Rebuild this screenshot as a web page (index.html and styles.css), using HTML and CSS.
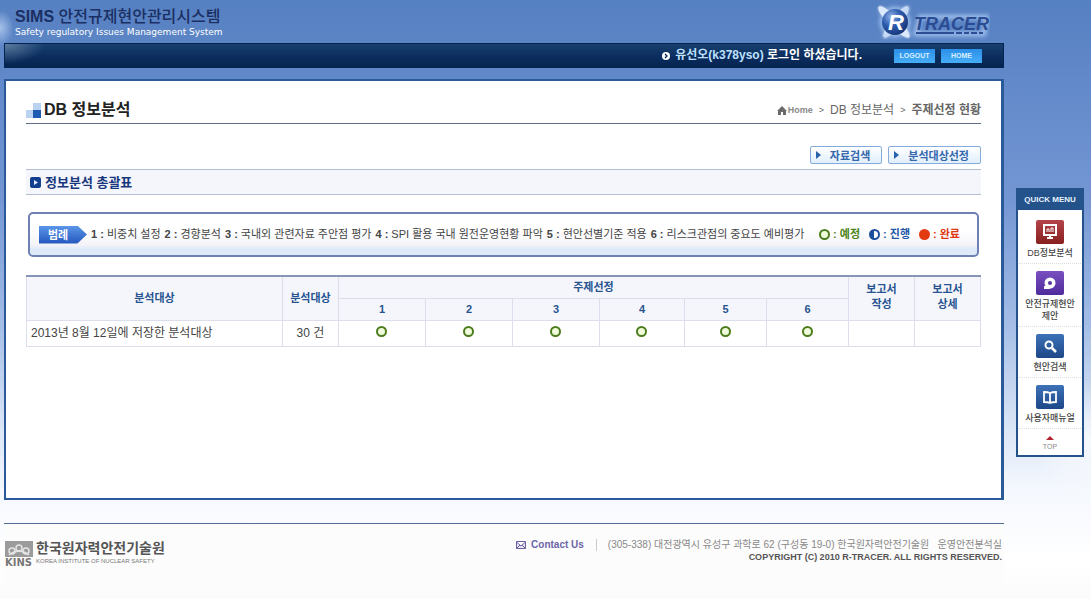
FILE: index.html
```html
<!DOCTYPE html>
<html lang="ko">
<head>
<meta charset="utf-8">
<title>SIMS 안전규제현안관리시스템</title>
<link rel="stylesheet" href="styles.css">
</head>
<body>
<div class="page">
  <div class="column">
    <header class="masthead">
      <a class="brand" href="#">
        <span class="brand-name"><b>SIMS</b> 안전규제현안관리시스템</span>
        <span class="brand-sub">Safety regulatory Issues Management System</span>
      </a>
      <a class="tracer" href="#" aria-label="R-TRACER">
        <svg width="116" height="40" viewBox="0 0 116 40">
          <defs>
            <radialGradient id="ball" cx=".35" cy=".3" r=".8"><stop offset="0" stop-color="#8fb2ea"/><stop offset=".45" stop-color="#2f5cae"/><stop offset="1" stop-color="#12306f"/></radialGradient>
            <filter id="halo" x="-20%" y="-30%" width="140%" height="160%"><feGaussianBlur stdDeviation="2"/></filter>
          </defs>
          <g filter="url(#halo)" fill="none" stroke="#a9c8f2" stroke-width="4"><circle cx="21" cy="21" r="13"/><path d="M6 8l30 26M10 36L34 6M42 33h68l3-17H46z"/></g>
          <ellipse cx="20" cy="21" rx="22" ry="6" transform="rotate(45 20 21)" fill="#dbe9fb" stroke="#88a6d8"/>
          <ellipse cx="22" cy="21" rx="20" ry="6" transform="rotate(-52 22 21)" fill="#c6daf6" stroke="#88a6d8"/>
          <circle cx="21" cy="21" r="13" fill="url(#ball)"/>
          <text x="14" y="29" class="logo-r">R</text>
          <text x="40" y="29" class="logo-word">TRACER</text>
          <path d="M42 32h38M82 32h6M90 32h5M97 32h6M105 32h4" stroke="#2b4c93" stroke-width="2"/>
        </svg>
      </a>
    </header>

    <div class="userbar">
      <svg width="8" height="8" viewBox="0 0 8 8"><circle cx="4" cy="4" r="4" fill="#fff"/><path d="M3 2l2 2-2 2" fill="none" stroke="#06285a" stroke-width="1.4"/></svg>
      <span class="user-msg"><span class="user-id">유선오(k378yso)</span> 로그인 하셨습니다.</span>
      <button class="mini" type="button">LOGOUT</button>
      <button class="mini" type="button">HOME</button>
    </div>

    <main class="panel">
      <div class="title-row">
        <svg width="15" height="15" viewBox="0 0 15 15"><path fill="#b9d3f1" d="M7 0h8v7H7zM0 7h7v8H0z"/><path fill="#1f5bb0" d="M7 7h8v8H7z"/></svg>
        <h1>DB 정보분석</h1>
        <nav class="crumbs">
          <a class="crumb-home" href="#"><svg width="10" height="9" viewBox="0 0 10 9"><path d="M5 0l5 5H9v4H6V6H4v3H1V5H0z" fill="#6b6b6b"/></svg>Home</a>
          <span class="sep">&gt;</span><a href="#">DB 정보분석</a><span class="sep">&gt;</span><b>주제선정 현황</b>
        </nav>
      </div>

      <div class="actions">
        <button class="act" type="button"><svg width="5" height="8" viewBox="0 0 5 8"><path d="M0 0l5 4-5 4z" fill="#2862a8"/></svg>자료검색</button>
        <button class="act" type="button"><svg width="5" height="8" viewBox="0 0 5 8"><path d="M0 0l5 4-5 4z" fill="#2862a8"/></svg>분석대상선정</button>
      </div>

      <h2 class="section">
        <svg width="11" height="11" viewBox="0 0 11 11"><rect width="11" height="11" rx="2" fill="#123f8e"/><path d="M4 3l4 2.500-4 2.500z" fill="#dce9ff"/></svg>
        정보분석 총괄표
      </h2>

      <div class="legend">
        <span class="legend-tag">범례</span>
        <ul class="legend-items">
          <li><b>1 :</b> 비중치 설정</li>
          <li><b>2 :</b> 경향분석</li>
          <li><b>3 :</b> 국내외 관련자료 주안점 평가</li>
          <li><b>4 :</b> SPI 활용 국내 원전운영현황 파악</li>
          <li><b>5 :</b> 현안선별기준 적용</li>
          <li><b>6 :</b> 리스크관점의 중요도 예비평가</li>
        </ul>
        <ul class="legend-states">
          <li class="plan"><i class="dot ring"></i>: 예정</li>
          <li class="work"><i class="dot half"></i>: 진행</li>
          <li class="done"><i class="dot full"></i>: 완료</li>
        </ul>
      </div>

      <table class="grid">
        <colgroup><col class="c-name"><col class="c-count"><col class="c-n"><col class="c-n"><col class="c-n"><col class="c-m"><col class="c-s"><col class="c-s"><col class="c-r"><col class="c-r"></colgroup>
        <thead>
          <tr><th rowspan="2">분석대상</th><th rowspan="2">분석대상</th><th colspan="6">주제선정</th><th rowspan="2" class="two-line">보고서<br>작성</th><th rowspan="2" class="two-line">보고서<br>상세</th></tr>
          <tr><th>1</th><th>2</th><th>3</th><th>4</th><th>5</th><th>6</th></tr>
        </thead>
        <tbody>
          <tr><td class="name">2013년 8월 12일에 저장한 분석대상</td><td>30 건</td><td><i class="dot ring"></i></td><td><i class="dot ring"></i></td><td><i class="dot ring"></i></td><td><i class="dot ring"></i></td><td><i class="dot ring"></i></td><td><i class="dot ring"></i></td><td></td><td></td></tr>
        </tbody>
      </table>
    </main>

    <footer class="foot">
      <div class="org">
        <svg width="28" height="26" viewBox="0 0 28 26">
          <path fill="#9b9b9b" d="M0 0h28v16H0z"/>
          <g fill="none" stroke="#e4e4e4" stroke-width="1.500"><circle cx="7" cy="10" r="3"/><circle cx="14" cy="7" r="3"/><circle cx="21" cy="10" r="3"/><path d="M4 14c5-5 15-5 20 0"/></g>
          <text x="0" y="25" class="kins">KINS</text>
        </svg>
        <div class="org-names"><span class="org-ko">한국원자력안전기술원</span><span class="org-en">KOREA INSTITUTE OF NUCLEAR SAFETY</span></div>
      </div>
      <div class="contact">
        <div class="contact-line">
          <a class="mail" href="#"><svg width="10" height="8" viewBox="0 0 10 8"><path d="M.5.5h9v7h-9zM.5 1L5 5l4.500-4M.5 7.500L4 4M9.500 7.500L6 4" fill="#e8e6f5" stroke="#6d64a6"/></svg>Contact Us</a>
          <address>(305-338) 대전광역시 유성구 과학로 62 (구성동 19-0) 한국원자력안전기술원 &nbsp; 운영안전분석실</address>
        </div>
        <div class="copy">COPYRIGHT (C) 2010 R-TRACER. ALL RIGHTS RESERVED.</div>
      </div>
    </footer>
  </div>

  <aside class="quick">
    <h3>QUICK MENU</h3>
    <ul>
      <li><a href="#"><svg class="q red" width="28" height="24" viewBox="0 0 28 24"><path d="M8 5h12v10H8zM11 18h6M14 15v3" fill="none" stroke="#fff" stroke-width="2"/><path d="M11 12V9h2v3M15 12V8h2v4" fill="none" stroke="#fff"/></svg>DB정보분석</a></li>
      <li><a href="#"><svg class="q violet" width="28" height="24" viewBox="0 0 28 24"><circle cx="14" cy="12" r="5.500" fill="#fff"/><path d="M8 15h6v3H8z" fill="#fff"/><circle cx="14" cy="12" r="2" fill="#5a35a0"/></svg>안전규제현안<br>제안</a></li>
      <li><a href="#"><svg class="q blue" width="28" height="24" viewBox="0 0 28 24"><circle cx="13" cy="11" r="3.500" fill="none" stroke="#fff" stroke-width="2"/><path d="M16 14l4 4" stroke="#fff" stroke-width="2.500"/></svg>현안검색</a></li>
      <li><a href="#"><svg class="q blue" width="28" height="24" viewBox="0 0 28 24"><path d="M14 8c-2-1-4-1-6-1v10c2 0 4 0 6 1 2-1 4-1 6-1V7c-2 0-4 0-6 1zv9" fill="none" stroke="#fff" stroke-width="1.800"/></svg>사용자매뉴얼</a></li>
      <li class="top"><a href="#"><svg width="8" height="4" viewBox="0 0 8 4"><path d="M4 0l4 4H0z" fill="#b32433"/></svg>TOP</a></li>
    </ul>
  </aside>
</div>
</body>
</html>
```
FILE: styles.css
```css
* { box-sizing: border-box; }
body {
  margin: 0;
  min-height: 100vh;
  font: 12px/15px "Liberation Sans", "Noto Sans CJK KR", sans-serif;
  color: #444;
  background:
    radial-gradient(ellipse 14px 18px at 0 28px, rgba(200, 220, 248, .7), transparent),
    radial-gradient(ellipse 60px 60px at 1091px 440px, rgba(255, 255, 255, .7), transparent),
    linear-gradient(#5580c1, #6289ca 80px, #7496d3 200px, #a3bce6 320px, #d7e3f5 420px, #f5f8fe 490px, #fff 560px, #fcfcfc 590px);
}
a { color: inherit; text-decoration: none; }
ul { list-style: none; margin: 0; padding: 0; }
button { font-family: inherit; cursor: pointer; }
svg { flex: none; }
.page { display: flex; align-items: flex-start; gap: 12px; padding: 0 7px 0 4px; }
.column { flex: 1; min-width: 0; }

.masthead { display: flex; justify-content: space-between; height: 43px; padding: 8px 14px 0 11px; }
.brand { display: flex; flex-direction: column; }
.brand-name { font-size: 16px; line-height: 18px; font-weight: 500; color: #1b2f63; }
.brand-name b { font-size: 16px; }
.brand-sub { font: 9px/12px "DejaVu Sans", sans-serif; color: #fff; }
.tracer { margin-top: -7px; }
.logo-r { font: italic bold 22px "Liberation Sans", sans-serif; fill: #fff; }
.logo-word { font: italic bold 18px "Liberation Sans", sans-serif; fill: #2b4c93; }

.userbar {
  display: flex; align-items: center; justify-content: flex-end;
  height: 25px; padding-right: 21px;
  border: 1px solid #052350;
  background: radial-gradient(ellipse 40px 20px at 0 0, rgba(150, 175, 200, .55), transparent), linear-gradient(#17406f, #0a2c5d 60%, #062450);
  color: #fff; font-weight: bold;
}
.user-msg { margin: 0 32px 0 5px; }
.user-id { color: #bfe0ff; }
.mini { width: 41px; height: 14px; margin-left: 6px; padding: 0; border: 0; background: linear-gradient(#2d8fe8, #45aef8); color: #d8efff; font-size: 7px; line-height: 14px; font-weight: bold; }
.user-msg + .mini { margin-left: 0; }

.panel { min-height: 421px; margin-top: 11px; padding: 16px 20px 0; border: 2px solid #2b5a9b; border-right-width: 3px; background: #fff; }
.title-row { display: flex; align-items: center; height: 27px; border-bottom: 1px solid #5f6b88; }
.title-row h1 { margin: 0 auto 0 3px; font-size: 16px; line-height: 24px; color: #222; }
.crumbs { display: flex; align-items: center; color: #666; }
.crumb-home { display: flex; align-items: center; gap: 1px; font-size: 9px; font-weight: bold; color: #888; }
.sep { margin: 0 6px; font-size: 9px; }
.actions { display: flex; justify-content: flex-end; gap: 6px; margin-top: 22px; }
.act { display: flex; align-items: center; gap: 9px; height: 18px; padding: 0 11px 0 5px; border: 1px solid #84abdc; border-radius: 2px; background: linear-gradient(#fff, #e0effc); color: #3568ac; font-size: 11px; font-weight: bold; }
.section { display: flex; align-items: center; gap: 4px; height: 26px; margin: 5px 0 0; padding-left: 4px; border: solid #b5bdd3; border-width: 1px 0; background: #f5f5fc; color: #17387d; font-size: 13px; }

.legend { display: flex; align-items: center; height: 45px; margin: 17px 2px 0; padding: 0 17px 0 9px; border: 2px solid #6f80b4; border-radius: 5px; background: linear-gradient(#fff 40%, #f4f3f8 75%, #dfeaf9 85%); font-size: 11px; white-space: nowrap; }
.legend-tag { width: 48px; height: 18px; padding-left: 9px; line-height: 18px; clip-path: polygon(0 0, 80% 0, 100% 50%, 80% 100%, 0 100%); background: linear-gradient(#5b96ea, #2456bd); color: #fff; font-weight: bold; }
.legend-items { display: flex; gap: 4px; margin: 0 auto 0 4px; }
.legend-states { display: flex; gap: 9px; font-weight: bold; }
.legend-states li { display: flex; align-items: center; gap: 3px; }
.plan { color: #4c8420; }
.work { color: #1c58a5; }
.done { color: #e03410; }
.dot { display: inline-block; width: 11px; height: 11px; border-radius: 50%; }
.ring { border: 2px solid #4c7c1c; background: #f0fbdc; }
.half { border: 2px solid #1c4f9c; background: linear-gradient(90deg, #1c4f9c 50%, #fff 50%); }
.full { background: #e33a12; }

.grid { width: 100%; margin-top: 18px; table-layout: fixed; border-collapse: collapse; border-top: 2px solid #8796b6; }
.grid th, .grid td { padding: 0; border: 1px solid #dcdeed; text-align: center; }
.grid th { height: 22px; background: #f5f6fc; color: #275491; font-size: 11px; }
.grid thead th { border-top-color: #e4e6f2; }
.grid td { height: 26px; }
.grid .name { padding-left: 4px; text-align: left; }
.grid .two-line { padding-bottom: 2px; }
.grid .dot { display: block; margin: -3px auto 0; }
.c-count { width: 56px; }
.c-n { width: 87px; }
.c-m { width: 85px; }
.c-s { width: 82px; }
.c-r { width: 66px; }

.foot { display: flex; justify-content: space-between; min-height: 76px; margin-top: 23px; padding: 15px 2px 0 1px; border-top: 1px solid #526c96; background: #fcfcfc; }
.org { display: flex; align-items: flex-start; gap: 3px; padding-top: 2px; }
.org-names { display: flex; flex-direction: column; }
.org-ko { font-size: 14px; line-height: 15px; font-weight: bold; color: #555; }
.org-en { font-size: 6px; line-height: 11px; color: #777; }
.kins { font: bold 10px "DejaVu Sans", sans-serif; fill: #777; }
.contact { text-align: right; font-size: 10px; line-height: 12px; white-space: nowrap; }
.contact-line { display: flex; justify-content: flex-end; color: #888; }
.contact address { padding-left: 11px; border-left: 1px solid #ccc; font-style: normal; }
.mail { display: flex; align-items: center; gap: 5px; margin-right: 12px; color: #6d64a6; font-weight: bold; }
.copy { color: #555; font-size: 9px; font-weight: bold; }

.quick { width: 68px; margin-top: 188px; border: 2px solid #24528a; background: #fff; text-align: center; line-height: 12px; }
.quick h3 { margin: 0; background: #24528a; color: #e8f2ff; font-size: 8px; line-height: 20px; }
.quick ul { padding: 3px 1px 0; }
.quick li { padding: 7px 0 4px; border-bottom: 1px dotted #ddd; font-size: 9px; font-weight: 500; white-space: nowrap; }
.quick a { display: block; }
.quick svg { display: block; margin: 0 auto 3px; }
.q { border-radius: 2px; }
.red { background: linear-gradient(#b5434a, #87201f); }
.violet { background: linear-gradient(#7a50c0, #4f2b9b); }
.blue { background: linear-gradient(#3d72b8, #1d4788); }
.quick .top { border: 0; font-size: 7px; line-height: 8px; color: #888; }
```
